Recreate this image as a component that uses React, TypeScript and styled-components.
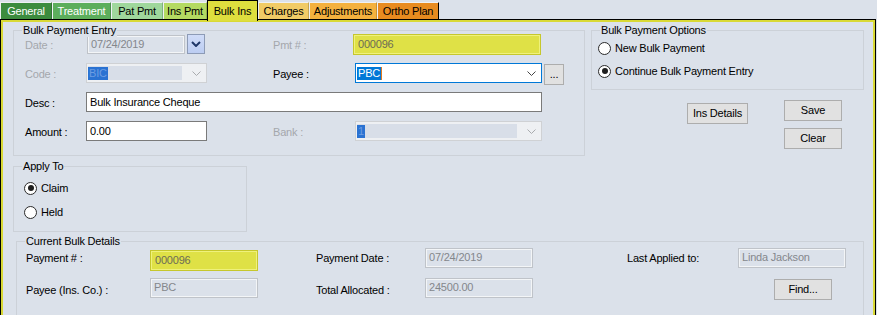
import React from 'react';
import styled, { createGlobalStyle } from 'styled-components';

const BG = '#dbe1ea';
const FONT = `"Liberation Sans", Arial, sans-serif`;

const Global = createGlobalStyle`
  html, body { margin: 0; padding: 0; background: ${BG}; }
  body { font-family: ${FONT}; font-size: 11px; color: #000; }
`;

const Screen = styled.div`
  width: 877px;
  height: 315px;
  overflow: hidden;
  background: ${BG};
  font-family: ${FONT};
  font-size: 11px;
  letter-spacing: -0.2px;
  line-height: 13px;
  color: #000;
`;

const TabBar = styled.div`
  display: flex;
  align-items: flex-end;
  height: 19px;
  position: relative;
  z-index: 2;
`;

const Tab = styled.div<{ $bg: string; $fg?: string; $w: number; $active?: boolean; $edge?: string }>`
  box-sizing: border-box;
  width: ${p => p.$w}px;
  height: ${p => (p.$active ? 21 : 17)}px;
  margin-bottom: ${p => (p.$active ? -2 : 0)}px;
  background: ${p => p.$bg};
  color: ${p => p.$fg ?? '#000'};
  border-top: 1px solid ${p => (p.$active ? '#000' : '#eef1f4')};
  border-left: 1px solid ${p => (p.$active ? '#000' : '#eef1f4')};
  border-right: 1px solid ${p => (p.$active ? '#000' : p.$edge ?? 'rgba(0,0,0,0.18)')};
  display: flex;
  align-items: center;
  justify-content: center;
  padding-top: ${p => (p.$active ? 1 : 0)}px;
  white-space: nowrap;
`;

const Panel = styled.div`
  box-sizing: border-box;
  width: 876px;
  height: 320px;
  border: 1px solid #000;
  box-shadow: inset 0 0 0 2px #d9d935;
  padding: 10px 0 0 12px;
  display: flex;
  flex-direction: column;
  align-items: flex-start;
`;

const TopRow = styled.div`
  display: flex;
  gap: 6px;
  align-items: flex-start;
`;

const GroupBox = styled.div<{ $w: number; $h: number; $mt?: number; $ml?: number }>`
  position: relative;
  box-sizing: border-box;
  width: ${p => p.$w}px;
  height: ${p => p.$h}px;
  margin-top: ${p => p.$mt ?? 0}px;
  margin-left: ${p => p.$ml ?? 0}px;
  border: 1px solid #ccd1d8;
`;

const GroupTitle = styled.span`
  position: absolute;
  top: -7px;
  left: 8px;
  padding: 0 1px;
  background: ${BG};
  line-height: 13px;
  white-space: nowrap;
`;

const EntryGrid = styled.div`
  display: grid;
  grid-template-columns: 61px 121px 66px 81px 188px auto;
  grid-template-rows: repeat(4, 20px);
  row-gap: 9px;
  padding: 3px 0 0 11px;
`;

const Label = styled.span<{ $disabled?: boolean; $col?: string; $dy?: number }>`
  grid-column: ${p => p.$col ?? 'auto'};
  align-self: center;
  padding-top: ${p => p.$dy ?? 2}px;
  white-space: nowrap;
  color: ${p => (p.$disabled ? '#a4a7ac' : '#000')};
`;

const Field = styled.div<{ $col?: string; $w?: number; $ml?: number; $mt?: number; $h?: number }>`
  grid-column: ${p => p.$col ?? 'auto'};
  box-sizing: border-box;
  width: ${p => (p.$w ? `${p.$w}px` : 'auto')};
  height: ${p => p.$h ?? 20}px;
  margin-left: ${p => p.$ml ?? 0}px;
  margin-top: ${p => p.$mt ?? 0}px;
  align-self: start;
  display: flex;
  align-items: center;
  white-space: nowrap;
  overflow: hidden;
`;

const WhiteInput = styled(Field)`
  background: #fff;
  border: 1px solid #7a7a7a;
  padding-left: 3px;
`;

const DisabledInput = styled(Field)`
  background: ${BG};
  border: 1px solid #bfc3c9;
  box-shadow: inset 0 0 0 1px #f3f5f7;
  padding-left: 3px;
  color: #84878c;
`;

const YellowInput = styled(Field)`
  background: #dfe146;
  border: 1px solid #c6c72c;
  box-shadow: inset 0 0 0 1px #eff17c;
  padding-left: 4px;
  color: #6c6c56;
`;

const DateField = styled.div`
  display: flex;
  align-items: flex-start;
  gap: 2px;
  padding-left: 1px;
  height: 20px;
`;

const DropButton = styled.div`
  box-sizing: border-box;
  width: 18px;
  height: 20px;
  border: 1px solid #8d9bb6;
  background: linear-gradient(#d0dcf8, #bccdf2);
  display: flex;
  align-items: center;
  justify-content: center;
`;

const Combo = styled(Field)<{ $focused?: boolean }>`
  border: 1px solid ${p => (p.$focused ? '#0078d7' : '#cfd1d4')};
  background: ${p => (p.$focused ? '#fff' : '#eef0f3')};
  padding: 0 5px 0 0;
`;

const ComboEdit = styled.div<{ $focused?: boolean }>`
  flex: 1;
  align-self: stretch;
  margin: 2px 10px 2px 1px;
  background: ${p => (p.$focused ? '#fff' : '#d8dee8')};
  display: flex;
  align-items: center;
`;

const Selection = styled.span<{ $focused?: boolean }>`
  background: ${p => (p.$focused ? '#0078d7' : '#2a72d2')};
  color: ${p => (p.$focused ? '#fff' : '#6c9de2')};
  line-height: 13px;
  padding: 0 1px;
`;

const Caret = styled.span`
  width: 1px;
  height: 13px;
  background: #e07a20;
`;

const Button = styled.div<{ $w: number; $h?: number; $mt?: number; $ml?: number; $col?: string }>`
  grid-column: ${p => p.$col ?? 'auto'};
  box-sizing: border-box;
  width: ${p => p.$w}px;
  height: ${p => p.$h ?? 21}px;
  margin-top: ${p => p.$mt ?? 0}px;
  margin-left: ${p => p.$ml ?? 0}px;
  align-self: start;
  background: #e1e1e1;
  border: 1px solid #adadad;
  display: flex;
  align-items: center;
  justify-content: center;
  white-space: nowrap;
`;

const RightColumn = styled.div`
  width: 273px;
  display: flex;
  flex-direction: column;
`;

const RadioList = styled.div<{ $pt: number; $pl: number; $gap: number }>`
  display: flex;
  flex-direction: column;
  gap: ${p => p.$gap}px;
  padding: ${p => p.$pt}px 0 0 ${p => p.$pl}px;
`;

const RadioRow = styled.div<{ $gap: number }>`
  display: flex;
  align-items: center;
  height: 16px;
  gap: ${p => p.$gap}px;
  white-space: nowrap;
`;

const RadioCircle = styled.span`
  box-sizing: border-box;
  width: 13px;
  height: 13px;
  border-radius: 50%;
  border: 1px solid #2a2a2a;
  background: #fff;
  display: flex;
  align-items: center;
  justify-content: center;
`;

const RadioDot = styled.span`
  width: 6px;
  height: 6px;
  border-radius: 50%;
  background: #1e1e1e;
`;

const ButtonArea = styled.div`
  display: flex;
  justify-content: flex-end;
  gap: 36px;
  padding-right: 22px;
  margin-top: 10px;
`;

const ButtonStack = styled.div`
  display: flex;
  flex-direction: column;
  gap: 7px;
`;

const DetailsGrid = styled.div`
  display: grid;
  grid-template-columns: 124px 108px 58px 109px 108px 94px 111px 108px;
  grid-template-rows: 20px 20px;
  row-gap: 10px;
  padding: 6px 0 0 9px;
`;

const Chevron: React.FC<{ color: string; bold?: boolean }> = ({ color, bold }) => (
  <svg width={bold ? 10 : 9} height={bold ? 6 : 5} viewBox={bold ? '0 0 10 6' : '0 0 9 5'}>
    <polyline
      points={bold ? '1,1 5,5 9,1' : '0.5,0.5 4.5,4.5 8.5,0.5'}
      fill="none"
      stroke={color}
      strokeWidth={bold ? 2 : 1}
    />
  </svg>
);

const Radio: React.FC<{ checked?: boolean; label: string; gap: number }> = ({ checked, label, gap }) => (
  <RadioRow $gap={gap}>
    <RadioCircle>{checked && <RadioDot />}</RadioCircle>
    <span>{label}</span>
  </RadioRow>
);

const tabs = [
  { label: 'General', bg: '#3c8c3e', fg: '#fff', w: 52 },
  { label: 'Treatment', bg: '#5cae5c', fg: '#fff', w: 59 },
  { label: 'Pat Pmt', bg: '#9fd79c', w: 52 },
  { label: 'Ins Pmt', bg: '#b4da62', w: 44 },
  { label: 'Bulk Ins', bg: '#dede3e', w: 51, active: true },
  { label: 'Charges', bg: '#f1cb66', w: 51 },
  { label: 'Adjustments', bg: '#f4b13e', w: 68 },
  { label: 'Ortho Plan', bg: '#e88b1f', w: 62, edge: '#000' },
];

export default function App() {
  return (
    <Screen>
      <Global />
      <TabBar>
        {tabs.map(t => (
          <Tab key={t.label} $bg={t.bg} $fg={t.fg} $w={t.w} $active={t.active} $edge={t.edge}>
            {t.label}
          </Tab>
        ))}
      </TabBar>
      <Panel>
        <TopRow>
          <GroupBox $w={572} $h={126}>
            <GroupTitle>Bulk Payment Entry</GroupTitle>
            <EntryGrid>
              <Label $disabled>Date :</Label>
              <DateField>
                <DisabledInput $w={98} $mt={1} $h={19}>07/24/2019</DisabledInput>
                <DropButton>
                  <Chevron color="#1f3768" bold />
                </DropButton>
              </DateField>
              <Label $disabled $col="4">Pmt # :</Label>
              <YellowInput $col="5" $w={188} $h={21} $ml={-1}>000096</YellowInput>

              <Label $disabled $col="1">Code :</Label>
              <Combo $w={121}>
                <ComboEdit>
                  <Selection>BIC</Selection>
                </ComboEdit>
                <Chevron color="#a9abae" />
              </Combo>
              <Label $col="4">Payee :</Label>
              <Combo $col="5" $w={187} $ml={1} $focused>
                <ComboEdit $focused>
                  <Selection $focused>PBC</Selection>
                  <Caret />
                </ComboEdit>
                <Chevron color="#444" />
              </Combo>
              <Button $w={20} $ml={2} $mt={1} $h={21}>...</Button>

              <Label $col="1">Desc :</Label>
              <WhiteInput $col="2 / 6" $w={456}>Bulk Insurance Cheque</WhiteInput>

              <Label $col="1">Amount :</Label>
              <WhiteInput $w={121}>0.00</WhiteInput>
              <Label $disabled $col="4">Bank :</Label>
              <Combo $col="5" $w={187} $ml={1}>
                <ComboEdit>
                  <Selection>1</Selection>
                </ComboEdit>
                <Chevron color="#a9abae" />
              </Combo>
            </EntryGrid>
          </GroupBox>

          <RightColumn>
            <GroupBox $w={273} $h={60}>
              <GroupTitle>Bulk Payment Options</GroupTitle>
              <RadioList $pt={9} $pl={6} $gap={7}>
                <Radio label="New Bulk Payment" gap={4} />
                <Radio label="Continue Bulk Payment Entry" gap={4} checked />
              </RadioList>
            </GroupBox>
            <ButtonArea>
              <Button $w={61} $mt={3}>Ins Details</Button>
              <ButtonStack>
                <Button $w={58}>Save</Button>
                <Button $w={58}>Clear</Button>
              </ButtonStack>
            </ButtonArea>
          </RightColumn>
        </TopRow>

        <GroupBox $w={234} $h={68} $mt={10}>
          <GroupTitle>Apply To</GroupTitle>
          <RadioList $pt={13} $pl={10} $gap={8}>
            <Radio label="Claim" gap={4} checked />
            <Radio label="Held" gap={4} />
          </RadioList>
        </GroupBox>

        <GroupBox $w={848} $h={100} $mt={9} $ml={3}>
          <GroupTitle>Current Bulk Details</GroupTitle>
          <DetailsGrid>
            <Label>Payment # :</Label>
            <YellowInput $w={108} $h={21} $mt={2}>000096</YellowInput>
            <Label $col="4">Payment Date :</Label>
            <DisabledInput $w={108}>07/24/2019</DisabledInput>
            <Label $col="7">Last Applied to:</Label>
            <DisabledInput $w={108}>Linda Jackson</DisabledInput>

            <Label $col="1" $dy={5}>Payee (Ins. Co.) :</Label>
            <DisabledInput $w={108}>PBC</DisabledInput>
            <Label $col="4" $dy={5}>Total Allocated :</Label>
            <DisabledInput $w={108}>24500.00</DisabledInput>
            <Button $col="8" $w={58} $ml={36} $mt={1}>Find...</Button>
          </DetailsGrid>
        </GroupBox>
      </Panel>
    </Screen>
  );
}
